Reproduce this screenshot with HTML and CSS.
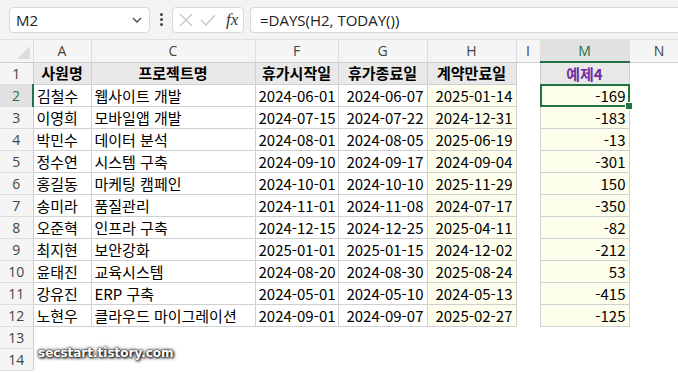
FILE: index.html
```html
<!DOCTYPE html>
<html lang="ko">
<head>
    <meta charset="UTF-8">
    <meta name="viewport" content="width=device-width, initial-scale=1.0">
    <title>DAYS 함수 예제</title>
    <link rel="stylesheet" href="styles.css">
</head>
<body>
    <div class="topbar">
        <div class="namebox">
            <span>M2</span>
            <svg class="chev" width="12" height="8" viewBox="0 0 12 8"><path d="M2 2l4 4 4-4" fill="none" stroke="#444" stroke-width="1.3"/></svg>
        </div>
        <div class="dots"><i></i><i></i><i></i></div>
        <div class="fx-btns">
            <svg width="16" height="16" viewBox="0 0 16 16"><path d="M2 2l12 12M14 2L2 14" stroke="#c4c4c4" stroke-width="1.3"/></svg>
            <svg width="18" height="16" viewBox="0 0 18 16"><path d="M2 8l5 5L16 3" fill="none" stroke="#c4c4c4" stroke-width="1.3"/></svg>
            <span class="fx">fx</span>
        </div>
        <div class="formula">=DAYS(H2, TODAY())</div>
    </div>

    <table class="sheet">
        <colgroup>
            <col class="w-rh"><col class="w-a"><col class="w-c"><col class="w-f"><col class="w-g"><col class="w-h"><col class="w-i"><col class="w-m"><col class="w-n">
        </colgroup>
        <thead>
            <tr>
                <th class="corner"></th>
                <th>A</th><th>C</th><th>F</th><th>G</th><th>H</th><th>I</th><th class="sel-col">M</th><th>N</th>
            </tr>
        </thead>
        <tbody>
            <tr>
                <th>1</th>
                <td class="cell hd">사원명</td>
                <td class="cell hd">프로젝트명</td>
                <td class="cell hd">휴가시작일</td>
                <td class="cell hd">휴가종료일</td>
                <td class="cell hd">계약만료일</td>
                <td></td>
                <td class="cell hd purple">예제4</td>
                <td></td>
            </tr>
            <tr>
                <th class="sel-row">2</th>
                <td class="cell">김철수</td><td class="cell">웹사이트 개발</td>
                <td class="cell num">2024-06-01</td><td class="cell num">2024-06-07</td><td class="cell num yel">2025-01-14</td>
                <td></td><td class="cell num yel active">-169</td><td></td>
            </tr>
            <tr>
                <th>3</th>
                <td class="cell">이영희</td><td class="cell">모바일앱 개발</td>
                <td class="cell num">2024-07-15</td><td class="cell num">2024-07-22</td><td class="cell num yel">2024-12-31</td>
                <td></td><td class="cell num yel">-183</td><td></td>
            </tr>
            <tr>
                <th>4</th>
                <td class="cell">박민수</td><td class="cell">데이터 분석</td>
                <td class="cell num">2024-08-01</td><td class="cell num">2024-08-05</td><td class="cell num yel">2025-06-19</td>
                <td></td><td class="cell num yel">-13</td><td></td>
            </tr>
            <tr>
                <th>5</th>
                <td class="cell">정수연</td><td class="cell">시스템 구축</td>
                <td class="cell num">2024-09-10</td><td class="cell num">2024-09-17</td><td class="cell num yel">2024-09-04</td>
                <td></td><td class="cell num yel">-301</td><td></td>
            </tr>
            <tr>
                <th>6</th>
                <td class="cell">홍길동</td><td class="cell">마케팅 캠페인</td>
                <td class="cell num">2024-10-01</td><td class="cell num">2024-10-10</td><td class="cell num yel">2025-11-29</td>
                <td></td><td class="cell num yel">150</td><td></td>
            </tr>
            <tr>
                <th>7</th>
                <td class="cell">송미라</td><td class="cell">품질관리</td>
                <td class="cell num">2024-11-01</td><td class="cell num">2024-11-08</td><td class="cell num yel">2024-07-17</td>
                <td></td><td class="cell num yel">-350</td><td></td>
            </tr>
            <tr>
                <th>8</th>
                <td class="cell">오준혁</td><td class="cell">인프라 구축</td>
                <td class="cell num">2024-12-15</td><td class="cell num">2024-12-25</td><td class="cell num yel">2025-04-11</td>
                <td></td><td class="cell num yel">-82</td><td></td>
            </tr>
            <tr>
                <th>9</th>
                <td class="cell">최지현</td><td class="cell">보안강화</td>
                <td class="cell num">2025-01-01</td><td class="cell num">2025-01-15</td><td class="cell num yel">2024-12-02</td>
                <td></td><td class="cell num yel">-212</td><td></td>
            </tr>
            <tr>
                <th>10</th>
                <td class="cell">윤태진</td><td class="cell">교육시스템</td>
                <td class="cell num">2024-08-20</td><td class="cell num">2024-08-30</td><td class="cell num yel">2025-08-24</td>
                <td></td><td class="cell num yel">53</td><td></td>
            </tr>
            <tr>
                <th>11</th>
                <td class="cell">강유진</td><td class="cell">ERP 구축</td>
                <td class="cell num">2024-05-01</td><td class="cell num">2024-05-10</td><td class="cell num yel">2024-05-13</td>
                <td></td><td class="cell num yel">-415</td><td></td>
            </tr>
            <tr>
                <th>12</th>
                <td class="cell">노현우</td><td class="cell">클라우드 마이그레이션</td>
                <td class="cell num">2024-09-01</td><td class="cell num">2024-09-07</td><td class="cell num yel">2025-02-27</td>
                <td></td><td class="cell num yel">-125</td><td></td>
            </tr>
            <tr>
                <th>13</th><td></td><td></td><td></td><td></td><td></td><td></td><td></td><td></td>
            </tr>
            <tr>
                <th>14</th><td></td><td></td><td></td><td></td><td></td><td></td><td></td><td></td>
            </tr>
        </tbody>
    </table>

    <div class="watermark">secstart.tistory.com</div>
</body>
</html>
```

FILE: styles.css
```css
body {
    margin: 0;
    width: 678px;
    height: 373px;
    overflow: hidden;
    background: #fff;
    font-family: "Noto Sans CJK KR", "Noto Sans", sans-serif;
    color: #000;
    position: relative;
}
.topbar {
    height: 40px;
    background: #f3f3f3;
    display: flex;
    align-items: center;
    padding: 0 0 0 9px;
    box-sizing: border-box;
    border-bottom: 1px solid #e0e0e0;
}
.namebox {
    width: 141px;
    height: 26px;
    box-sizing: border-box;
    background: #fff;
    border: 1px solid #d9d9d9;
    border-radius: 4px;
    display: flex;
    align-items: center;
    justify-content: space-between;
    padding: 0 6px 0 6px;
    font-family: "Open Sans", "Noto Sans", sans-serif;
    font-size: 15px;
    color: #222;
}
.dots {
    width: 22px;
    display: flex;
    flex-direction: column;
    align-items: center;
    gap: 2px;
}
.dots i {
    width: 3px;
    height: 3px;
    background: #444;
    border-radius: 50%;
}
.fx-btns {
    width: 72px;
    height: 26px;
    box-sizing: border-box;
    background: #fff;
    border: 1px solid #d9d9d9;
    border-radius: 4px;
    display: flex;
    align-items: center;
    gap: 5px;
    padding-left: 5px;
}
.fx {
    font-family: "Liberation Serif", serif;
    font-style: italic;
    font-size: 17px;
    color: #333;
    margin-left: 4px;
}
.formula {
    margin-left: 6px;
    flex: 1;
    height: 26px;
    box-sizing: border-box;
    background: #fff;
    border: 1px solid #d9d9d9;
    border-right: none;
    border-radius: 4px 0 0 4px;
    padding-left: 9px;
    font-family: "Open Sans", "Noto Sans", sans-serif;
    font-size: 15px;
    line-height: 24px;
    color: #222;
}
.sheet {
    border-collapse: collapse;
    table-layout: fixed;
    width: 689px;
}
.w-rh { width: 33px; }
.w-a { width: 58px; }
.w-c { width: 164px; }
.w-f { width: 83px; }
.w-g { width: 89px; }
.w-h { width: 89px; }
.w-i { width: 24px; }
.w-m { width: 89px; }
.w-n { width: 60px; }
.sheet tr {
    height: 22px;
}
.sheet th, .sheet td {
    padding: 0;
    height: 21px;
    white-space: nowrap;
    overflow: hidden;
}
.sheet thead th {
    background: #f5f5f5;
    border-right: 1px solid #dedede;
    border-bottom: 1px solid #cdcdcd;
    font-family: "Open Sans", "Noto Sans", sans-serif;
    font-weight: normal;
    font-size: 14px;
    color: #444;
    height: 21px;
}
.sheet thead th.corner {
    position: relative;
}
.corner::after {
    content: "";
    position: absolute;
    right: 3px;
    bottom: 3px;
    border-style: solid;
    border-width: 0 0 13px 13px;
    border-color: transparent transparent #dcdcdc transparent;
}
.sheet thead th.sel-col {
    background: #e1e1e1;
    color: #217346;
    border-bottom: 2px solid #217346;
}
.sheet tbody th {
    background: #f5f5f5;
    border-right: 1px solid #cdcdcd;
    border-bottom: 1px solid #dedede;
    font-family: "Open Sans", "Noto Sans", sans-serif;
    font-weight: normal;
    font-size: 14px;
    color: #444;
}
.sheet tbody th.sel-row {
    background: #e1e1e1;
    color: #217346;
    border-right: 2px solid #217346;
}
.cell {
    border: 1px solid #d0d0d0;
    font-size: 15px;
    line-height: 20px;
    padding: 0 3px !important;
}
.hd {
    background: #e8e8e8;
    font-weight: bold;
    text-align: center;
}
.purple {
    color: #7030a0;
}
.num {
    text-align: right;
}
.yel {
    background: #fefeec;
}
.active {
    position: relative;
    overflow: visible !important;
}
.active::before {
    content: "";
    position: absolute;
    left: -1px;
    top: -1px;
    right: -1px;
    bottom: -1px;
    border: 2px solid #217346;
}
.active::after {
    content: "";
    position: absolute;
    right: -4px;
    bottom: -4px;
    width: 6px;
    height: 6px;
    background: #217346;
    border: 1px solid #fff;
}
.watermark {
    position: absolute;
    left: 38px;
    top: 346px;
    font-family: "DejaVu Sans", sans-serif;
    font-weight: bold;
    font-size: 12px;
    color: #fff;
    text-shadow: 0 0 2px #000, 1px 1px 3px #000, 0 0 4px #333;
}
```
